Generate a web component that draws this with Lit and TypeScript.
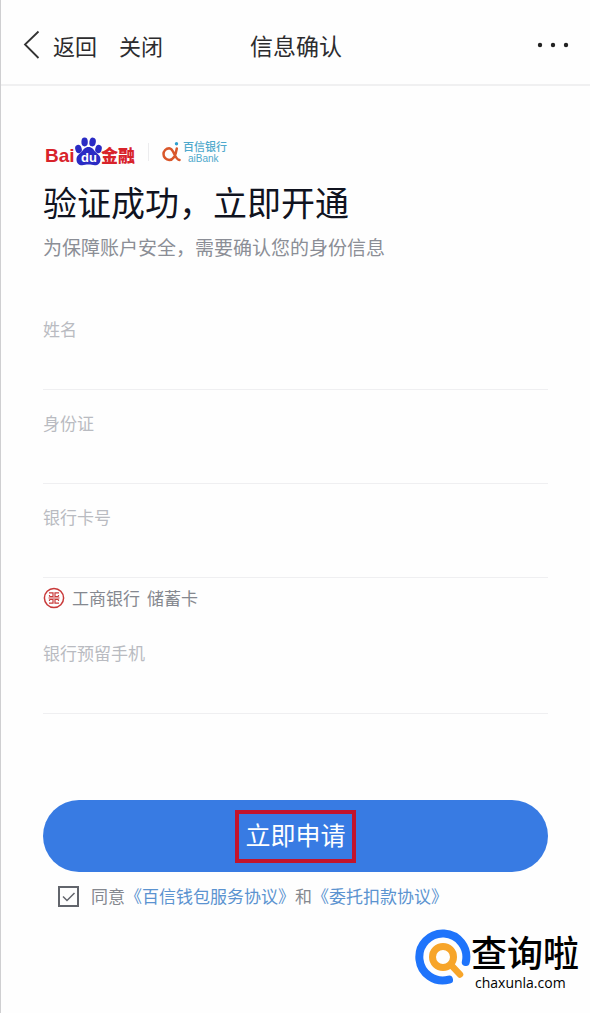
import { LitElement, html, css, svg } from "lit";
import { customElement, property } from "lit/decorators.js";

const baiduLogo = svg`
  <svg class="baidu" viewBox="0 0 92 32" role="img" aria-label="Baidu 金融">
    <text x="0" y="26" class="latin">Bai</text>
    <g fill="#2a2bc4">
      <ellipse cx="33.5" cy="13" rx="3.2" ry="4.2" transform="rotate(-18 33.5 13)" />
      <ellipse cx="39.6" cy="6" rx="3.200" ry="4.4" />
      <ellipse cx="47.6" cy="6" rx="3.200" ry="4.4" transform="rotate(10 47.6 6)" />
      <ellipse cx="53.500" cy="13" rx="3.200" ry="4.2" transform="rotate(16 53.5 13)" />
      <path d="M43.500 11c3.600 0 5 2.600 6.800 4.800 2 2.200 5.200 3.700 5.200 7.600 0 3.600-2.400 5.800-5.600 5.800-2.300 0-4-.7-6.400-.7s-4.100.7-6.400.7c-3.200 0-5.600-2.200-5.600-5.800 0-3.900 3.200-5.400 5.200-7.600 1.800-2.200 3.200-4.800 6.800-4.800z" />
    </g>
    <text x="36" y="26" class="du">du</text>
    <text x="56" y="26" class="han">金融</text>
  </svg>`;

const aiMark = svg`
  <svg class="ai" viewBox="0 0 20 22" aria-hidden="true">
    <path d="M14.800 7.500C13.800 14 11.500 19 7.200 19A5.900 5.900 0 0 1 1.500 13.100 5.900 5.900 0 0 1 7.200 7.200C12 7.200 12.500 18.700 17.500 19" fill="none" stroke="#d9572b" stroke-width="2.500" stroke-linecap="round" />
    <circle cx="14.500" cy="2.800" r="1.700" fill="#2f9fd0" />
  </svg>`;

const icbcMark = svg`
  <svg class="icbc" viewBox="0 0 22 22" aria-hidden="true">
    <g fill="none" stroke="#c93a3a">
      <circle cx="11" cy="11" r="9.600" stroke-width="1.500" />
      <path d="M6 5.800h4v3.700H6.500M16 5.800h-4v3.700h3.500M6.500 12.500H10v3.700H6M15.500 12.500H12v3.700h4M6.500 9.500V8M15.500 9.500V8M6.500 12.500V14M15.500 12.500V14M5.500 11h11" stroke-width="1.200" />
    </g>
  </svg>`;

@customElement("form-field")
class FormField extends LitElement {
  @property() label = "";
  @property() kind = "text";

  static styles = css`
    :host {
      display: block;
    }
    .field {
      display: flex;
      flex-direction: column;
      box-sizing: border-box;
      padding-top: 21px;
      border-bottom: 1px solid #efeff1;
    }
    .label {
      font-size: 17px;
      line-height: 24px;
      color: #b9bbc1;
    }
    .input {
      height: 48px;
      box-sizing: border-box;
      padding: 0;
      border: 0;
      outline: 0;
      background: transparent;
      font: inherit;
      font-size: 19px;
      color: #10131f;
    }
  `;

  render() {
    return html`<div class="field">
      <label class="label" for="value">${this.label}</label>
      <input class="input" id="value" type=${this.kind} />
    </div>`;
  }
}

@customElement("app-root")
class AppRoot extends LitElement {
  static styles = css`
    :host {
      display: block;
      position: relative;
      box-sizing: border-box;
      min-height: 100vh;
      border-left: 1px solid #cfcfd1;
      background: #fefefe;
      font-family: "Noto Sans CJK SC", sans-serif;
      color: #10131f;
    }
    button {
      font: inherit;
      color: inherit;
      border: 0;
      padding: 0;
      background: none;
    }
    .bar {
      display: grid;
      grid-template-columns: 1fr auto 1fr;
      align-items: center;
      box-sizing: border-box;
      height: 86px;
      padding: 6px 21px 0 22px;
      border-bottom: 2px solid #f0f0f1;
      font-size: 22px;
      line-height: 32px;
      color: #2c2c2e;
    }
    .left {
      display: flex;
      gap: 22px;
    }
    .back {
      display: flex;
      align-items: center;
      gap: 13px;
    }
    .chevron {
      width: 17px;
      height: 30px;
    }
    .title {
      margin: 0;
      font-size: 23px;
      font-weight: 400;
    }
    .more {
      justify-self: end;
      display: flex;
    }
    .dots {
      width: 32px;
      height: 6px;
    }
    .main {
      padding: 47px 42px 0;
    }
    .brands {
      display: flex;
      align-items: center;
      height: 38px;
      padding-left: 2px;
    }
    .baidu {
      width: 92px;
      height: 32px;
    }
    .latin {
      font: 700 19px "Liberation Sans", sans-serif;
      fill: #d8232a;
    }
    .du {
      font: 700 13px "Liberation Sans", sans-serif;
      fill: #fff;
    }
    .han {
      font: 900 17px "Noto Sans CJK SC", sans-serif;
      fill: #d8232a;
    }
    .split {
      width: 1px;
      height: 18px;
      margin: 0 13px 0 11px;
      background: #ececee;
    }
    .ai {
      width: 20px;
      height: 22px;
    }
    .bank {
      display: flex;
      flex-direction: column;
      padding: 2px 0 0 1px;
      font-family: "Liberation Sans", "Noto Sans CJK SC", sans-serif;
      font-size: 11px;
      line-height: 12px;
      font-weight: 500;
      color: #4fa9cc;
    }
    .latin-name {
      padding-left: 5px;
      font-size: 10px;
    }
    .heading {
      margin: 6px 0 0;
      font-size: 34px;
      line-height: 50px;
      font-weight: 400;
    }
    .sub {
      margin: 6px 0 35px;
      font-size: 19px;
      line-height: 28px;
      color: #8b8e96;
      white-space: nowrap;
    }
    .card {
      display: flex;
      align-items: center;
      gap: 7px;
      padding: 8px 0 10px;
      font-size: 17px;
      line-height: 24px;
      color: #85888f;
    }
    .icbc {
      width: 22px;
      height: 22px;
    }
    .submit {
      display: flex;
      align-items: center;
      justify-content: center;
      width: 100%;
      height: 72px;
      margin-top: 86px;
      border-radius: 36px;
      background: #387be3;
      color: #fff;
      font-size: 25px;
      line-height: 36px;
    }
    .mark {
      padding: 2px 6px 7px;
      border: 4px solid #c3142c;
    }
    .agree {
      display: flex;
      align-items: center;
      height: 24px;
      margin-top: 12px;
      padding-left: 15px;
      font-size: 17px;
      line-height: 24px;
      color: #85888f;
      white-space: nowrap;
    }
    .check {
      appearance: none;
      width: 21px;
      height: 21px;
      margin: 0;
      border: 2px solid #62656c;
    }
    .tickbox {
      display: grid;
      margin-right: 12px;
    }
    .check,
    .tick {
      grid-area: 1 / 1;
    }
    .tick {
      width: 21px;
      height: 21px;
      pointer-events: none;
      visibility: hidden;
    }
    .check:checked + .tick {
      visibility: visible;
    }
    .link {
      color: #5b93d0;
      text-decoration: none;
    }
    .stamp {
      position: absolute;
      right: 11px;
      bottom: 24px;
      display: flex;
      align-items: flex-start;
      color: #000;
    }
    .lens {
      width: 56px;
      height: 56px;
    }
    .words {
      display: flex;
      flex-direction: column;
      padding-top: 4px;
    }
    .name {
      font-family: "Liberation Serif", "Noto Sans CJK SC", sans-serif;
      font-size: 36px;
      line-height: 44px;
      font-weight: 500;
    }
    .site {
      padding-left: 4px;
      font-family: "Open Sans", sans-serif;
      font-size: 14px;
      line-height: 12px;
      font-weight: 500;
    }
  `;

  render() {
    return html`
      <header class="bar">
        <div class="left">
          <button class="back" type="button">
            <svg class="chevron" viewBox="0 0 17 30" aria-hidden="true">
              <path d="M15.500 1.500 2 14.500l13.500 13.500" fill="none" stroke="#333" stroke-width="1.800" />
            </svg>返回
          </button>
          <button type="button">关闭</button>
        </div>
        <h1 class="title">信息确认</h1>
        <button class="more" type="button" aria-label="更多">
          <svg class="dots" viewBox="0 0 32 6" fill="#222">
            <circle cx="3" cy="3" r="2.200" /><circle cx="16" cy="3" r="2.200" /><circle cx="29" cy="3" r="2.200" />
          </svg>
        </button>
      </header>
      <main class="main">
        <div class="brands">
          ${baiduLogo}
          <span class="split"></span>
          ${aiMark}
          <span class="bank"><span>百信银行</span><span class="latin-name">aiBank</span></span>
        </div>
        <h2 class="heading">验证成功，立即开通</h2>
        <p class="sub">为保障账户安全，需要确认您的身份信息</p>
        <form-field label="姓名"></form-field>
        <form-field label="身份证"></form-field>
        <form-field label="银行卡号"></form-field>
        <div class="card">${icbcMark}<span>工商银行</span><span>储蓄卡</span></div>
        <form-field label="银行预留手机" kind="tel"></form-field>
        <button class="submit" type="button"><span class="mark">立即申请</span></button>
        <div class="agree">
          <span class="tickbox">
            <input class="check" id="agree" type="checkbox" checked />
            <svg class="tick" viewBox="0 0 21 21" aria-hidden="true">
              <path d="M5 10.500l4 4 7.500-7.500" fill="none" stroke="#62656c" stroke-width="1.500" />
            </svg>
          </span>
          <label for="agree">同意</label><a class="link" href="#service">《百信钱包服务协议》</a><span>和</span><a class="link" href="#debit">《委托扣款协议》</a>
        </div>
      </main>
      <div class="stamp">
        <svg class="lens" viewBox="0 0 56 56" aria-hidden="true">
          <path d="M34 50.700A23.500 23.500 0 1 1 50.800 33" fill="none" stroke="#1f74fb" stroke-width="8" stroke-linecap="round" />
          <circle cx="28" cy="28" r="10.500" fill="none" stroke="#f7a52a" stroke-width="7" />
          <path d="M37 37l8 8.500" stroke="#f7a52a" stroke-width="6.500" stroke-linecap="round" />
        </svg>
        <div class="words"><span class="name">查询啦</span><span class="site">chaxunla.com</span></div>
      </div>
    `;
  }
}
